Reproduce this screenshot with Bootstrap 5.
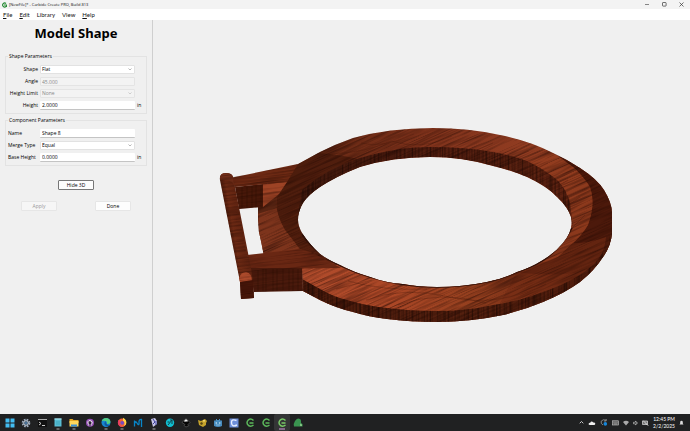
<!DOCTYPE html>
<html lang="en">
<head>
<meta charset="utf-8">
<meta name="viewport" content="width=device-width, initial-scale=1">
<title>[NewFile]* - Carbide Create PRO, Build 813</title>
<link href="https://cdn.jsdelivr.net/npm/bootstrap@5.3.0/dist/css/bootstrap.min.css" rel="stylesheet">
<style>
body{font-family:"Open Sans","Noto Sans",sans-serif;font-size:5px;line-height:7px;color:#111;background:#f0f0f0}
svg{display:block}
button{font:inherit;color:inherit;background:none;border:0;padding:0}
.titlebar{background:#f3f3f3;height:9px;padding-left:2px;gap:2px}
.titlebar .caption{color:#111;font-size:4px}
.winbtn{width:17px;height:9px;display:grid;place-items:center}
.menubar{background:#fff;height:11px;padding-left:3px;gap:7px;font-family:Lato,sans-serif;font-size:6px}
.menubar a{color:#111;text-decoration:none}
.menubar u{text-underline-offset:1px}
.side{width:153px;border-right:1px solid #cfcfcf;padding:0 5px}
.side form{color:#000}
.side h1{font-family:"Noto Sans","Open Sans",sans-serif;font-size:13px;line-height:18px;font-weight:700;margin:4px 0 11px;text-align:center;color:#000}
fieldset.group{border:1px solid #e3e3e3;padding:5px 2px 0;margin:0 0 3px}
fieldset.group legend{float:none;width:auto;font-size:5px;line-height:7px;margin:0;padding:0 1px}
.prop{display:grid;grid-template-columns:30px 1fr 7px;column-gap:2px;align-items:center;height:9px;margin-bottom:3px}
.prop input,.prop select{height:9px;width:100%;font:inherit;line-height:7px;border:0;border-bottom:1px solid #c4c4c4;background:#fff;color:#000;padding:0 2px;border-radius:1px;appearance:none}
.prop select{border:1px solid #e2e2e2;padding:0 1px}
.prop :disabled{background:#f3f3f3;color:#888;border:1px solid #e4e4e4;padding:0 1px;opacity:1}
.pick{display:grid;align-items:center}
.pick>*{grid-area:1/1}
.pick svg{justify-self:end;margin-right:3px;pointer-events:none}
.actions{padding-top:11px}
.push{width:36px;height:10px;background:#fdfdfd;border:1px solid #e6e6e6;border-radius:1px;line-height:8px}
.push.focused{border-color:#777}
.push:disabled{color:#999;background:#f6f6f6}
.taskbar{background:#202122;height:17px;padding-left:2px;color:#fff}
.app{width:16px;height:17px;display:grid;place-items:center;align-content:center;border-radius:2px}
.app.active{background:#343536}
.tray{gap:4px;padding-right:6px}
.clock{text-align:right;font-family:Lato,sans-serif;font-size:5px;line-height:7px}
</style>
<script src="https://cdn.jsdelivr.net/npm/bootstrap@5.3.0/dist/js/bootstrap.bundle.min.js"></script>
</head>
<body class="d-flex flex-column vh-100 overflow-hidden">
<header>
  <div class="titlebar d-flex align-items-center">
    <svg width="5" height="6" viewBox="0 0 10 12"><path d="M8 3A4 4 0 1 0 8 9M4 6h5v4" fill="none" stroke="#278b35" stroke-width="2.3"/></svg>
    <span class="caption">[NewFile]* - Carbide Create PRO, Build 813</span>
    <div class="d-flex ms-auto">
      <button class="winbtn" aria-label="Minimize"><svg width="5" height="5"><path d="M0 2.5h4" stroke="#555" stroke-width=".7"/></svg></button>
      <button class="winbtn" aria-label="Maximize"><svg width="5" height="5"><rect x=".5" y=".5" width="3.6" height="3.6" rx=".6" fill="none" stroke="#333" stroke-width=".7"/></svg></button>
      <button class="winbtn" aria-label="Close"><svg width="5" height="5"><path d="M.5.5l4 4m0-4l-4 4" stroke="#333" stroke-width=".7"/></svg></button>
    </div>
  </div>
  <nav class="menubar d-flex align-items-center">
    <a href="#"><u>F</u>ile</a><a href="#"><u>E</u>dit</a><a href="#">Library</a><a href="#">View</a><a href="#"><u>H</u>elp</a>
  </nav>
</header>
<main class="d-flex flex-grow-1 overflow-hidden">
  <aside class="side flex-shrink-0">
    <h1>Model Shape</h1>
    <form>
      <fieldset class="group">
        <legend>Shape Parameters</legend>
        <div class="prop"><label class="text-end" for="shape">Shape</label><div class="pick"><select id="shape"><option>Flat</option></select><svg width="4" height="3"><path d="M.5.5L2 2 3.5.5" fill="none" stroke="#999" stroke-width=".7"/></svg></div></div>
        <div class="prop"><label class="text-end" for="angle">Angle</label><input id="angle" value="45.000" disabled></div>
        <div class="prop"><label class="text-end text-nowrap" for="limit">Height Limit</label><div class="pick"><select id="limit" disabled><option>None</option></select><svg width="4" height="3"><path d="M.5.5L2 2 3.5.5" fill="none" stroke="#bbb" stroke-width=".7"/></svg></div></div>
        <div class="prop"><label class="text-end" for="height">Height</label><input id="height" value="2.0000"><span>in</span></div>
      </fieldset>
      <fieldset class="group">
        <legend>Component Parameters</legend>
        <div class="prop"><label for="name">Name</label><input id="name" value="Shape 8"></div>
        <div class="prop"><label class="text-nowrap" for="merge">Merge Type</label><div class="pick"><select id="merge"><option>Equal</option></select><svg width="4" height="3"><path d="M.5.5L2 2 3.5.5" fill="none" stroke="#999" stroke-width=".7"/></svg></div></div>
        <div class="prop"><label class="text-nowrap" for="base">Base Height</label><input id="base" value="0.0000"><span>in</span></div>
      </fieldset>
      <div class="actions text-center"><button type="button" class="push focused">Hide 3D</button></div>
      <div class="actions d-flex justify-content-between px-3"><button type="button" class="push" disabled>Apply</button><button type="button" class="push">Done</button></div>
    </form>
  </aside>
  <section class="flex-grow-1 overflow-hidden">
    <svg width="100%" height="100%" viewBox="153 20 537 394" role="img" aria-label="3D preview">
      <defs>
        <filter id="grain" x="0" y="0" width="1" height="1" color-interpolation-filters="sRGB"><feTurbulence type="fractalNoise" baseFrequency=".02 .6" numOctaves="3" seed="8"/><feColorMatrix values="0 0 0 0 .12  0 0 0 0 .03  0 0 0 0 .01  2.4 0 0 0 -1"/></filter>
        <filter id="vgrain" x="0" y="0" width="1" height="1" color-interpolation-filters="sRGB"><feTurbulence type="fractalNoise" baseFrequency=".5 .006" numOctaves="3" seed="5"/><feColorMatrix values="0 0 0 0 .1  0 0 0 0 .03  0 0 0 0 .01  3 0 0 0 -1.25"/></filter>
        <linearGradient id="face" gradientUnits="userSpaceOnUse" x1="300" y1="120" x2="570" y2="310"><stop offset="0" stop-color="#5c2511"/><stop offset=".35" stop-color="#7f321b"/><stop offset=".6" stop-color="#913c21"/><stop offset="1" stop-color="#6e2912"/></linearGradient>
        <linearGradient id="lower" gradientUnits="userSpaceOnUse" x1="302" y1="0" x2="600" y2="0"><stop offset="0" stop-color="#b14c2c"/><stop offset=".3" stop-color="#ab4726"/><stop offset=".55" stop-color="#96401f"/><stop offset=".8" stop-color="#732c14"/><stop offset="1" stop-color="#55200f"/></linearGradient>
        <linearGradient id="wall" gradientUnits="userSpaceOnUse" x1="300" y1="0" x2="612" y2="0"><stop offset="0" stop-color="#4a1b0c"/><stop offset=".5" stop-color="#54200f"/><stop offset="1" stop-color="#4e1c0c"/></linearGradient>
        <linearGradient id="innerwall" gradientUnits="userSpaceOnUse" x1="300" y1="0" x2="572" y2="0"><stop offset="0" stop-color="#421a0e"/><stop offset=".5" stop-color="#521e10"/><stop offset="1" stop-color="#602412"/></linearGradient>
        <linearGradient id="bar" gradientUnits="userSpaceOnUse" x1="226" y1="235" x2="244" y2="232"><stop offset="0" stop-color="#391206"/><stop offset=".45" stop-color="#6d2a14"/><stop offset="1" stop-color="#602411"/></linearGradient>
        <clipPath id="ring"><path clip-rule="evenodd" d="M298 164L320 152Q336 144 353 138Q389 128 433 128Q469 128 500 135Q530 141 553 153Q568 160 580 168Q597 179 604 190Q612 203 612 213V233Q611 246 603 257Q595 270 580 282Q565 293 543 302Q524 310 503 315Q470 322 437 322Q410 322 387 319Q369 317 353 312Q336 308 320 300L303 291L302 268L264 256L261 241Q258 231 258 220V207L263 187Z M298 220Q298 211 303 203Q308 195 320 187Q337 176 360 167Q393 157 430 157Q463 157 493 166Q510 170 527 177Q548 187 557 197Q568 207 571 217Q574 230 563 243Q556 252 543 260Q530 268 517 272Q503 279 487 282Q463 287 437 287Q418 287 403 284Q386 283 370 277Q353 272 340 265Q328 260 320 254Q310 245 302 233Q298 226 298 220Z"/></clipPath>
        <clipPath id="outwall"><path id="outwallshape" d="M302 279L320 289Q334 297 347 300Q367 306 387 308Q410 311 437 311Q467 311 493 305Q520 301 540 293Q564 285 580 275Q596 265 603 252Q610 240 612 227L613 323H302Z"/></clipPath>
        <clipPath id="inwall"><path id="inwallshape" d="M302 190Q326 169 360 158Q380 152 400 149Q415 147 430 147Q465 147 493 152Q514 156 527 161Q544 169 557 180Q566 188 570 203L573 228Q569 207 557 197Q546 185 527 177Q510 170 493 166Q462 157 430 157Q393 157 360 167Q336 176 320 187Q308 195 303 203L298 217Z"/></clipPath>
        <clipPath id="fixture"><path d="M220 180Q219 173 226 173Q232 173 233 177L298 164L287 182L279 194L263 207L239 209L247 257L300 249L313 253L341 268H302L303 291L254 292V298L241 299L240 282Z"/></clipPath>
      </defs>
      <g clip-path="url(#ring)">
        <path fill="url(#face)" d="M250 120h370v210H250z"/>
        <path fill="url(#lower)" d="M300 266L340 265Q387 285 437 287Q475 286 517 272L558 257L600 255L580 282L437 322L302 300Z"/>
        <path fill="#3d1509" fill-opacity=".6" d="M298 164L278 193Q275 202 277 210Q279 220 285 230L300 249L342 267L320 254L299 222L304 201L320 187L345 174L370 162Q340 154 318 153Z"/>
        <path fill="#7d341c" d="M257 180L278 193Q275 202 277 210Q279 220 285 230L301 251L260 260Z"/>
        <path fill="#582412" d="M255 180L298 163L278 193Q276 200 277 208L257 214Z"/>
        <path fill="#4c190b" d="M545 146L573 167Q584 177 590 187Q596 203 588 225Q582 235 573 243L558 257Q535 266 520 273Q560 276 580 272L615 250V150Z"/>
        <path fill="#98401f" fill-opacity=".6" d="M553 153L573 167Q584 177 590 187Q596 203 588 225Q582 235 573 243L558 257Q550 262 543 262L572 225L570 200L557 180L530 162Z"/>
        <path fill="#732b14" d="M517 272L558 257L573 243Q590 243 606 237Q605 252 596 262Q575 282 540 293L500 303Z" opacity=".6"/>
        <use href="#inwallshape" fill="url(#innerwall)"/>
        <use href="#outwallshape" fill="url(#wall)"/>
        <g transform="rotate(-24 430 225)"><rect x="215" y="60" width="430" height="330" filter="url(#grain)" opacity=".55"/></g>
        <g clip-path="url(#inwall)"><rect x="290" y="130" width="290" height="110" filter="url(#vgrain)" opacity=".6"/></g>
        <g clip-path="url(#outwall)"><rect x="300" y="220" width="315" height="105" filter="url(#vgrain)" opacity=".6"/></g>
        <g fill="none" stroke="#42160b" stroke-opacity=".5" stroke-width=".6"><path d="M329 154Q365 153 391 141Q423 151 452 136M361 143Q382 149 414 134M348 281Q383 291 427 289M366 300Q404 286 450 297T546 284M398 305Q440 290 486 303M336 289L372 280M493 143L477 150M529 151L500 162M548 163L522 176M568 180L548 192M580 197L560 211M585 215L563 237"/></g>
        <path d="M302 234Q320 262 370 277Q402 287 437 287Q488 286 517 272Q555 261 572 228" stroke="#2d1009" stroke-width="1.6" fill="none"/>
      </g>
      <path fill="#9d4325" d="M263 184L287 182L279 194L263 207Z"/>
      <path fill="#471809" d="M235 187L263 184V207L239 209Z"/>
      <path fill="#6c2913" d="M230 178L298 164L287 182L235 187Z"/>
      <path fill="#692713" d="M242 256L247 255L300 249L313 253L341 268L249 269Z"/>
      <path fill="#4a1a0c" d="M249 268H302L303 291L254 292Z"/>
      <path fill="url(#bar)" d="M220 180Q219 173 226 173Q232 173 233 177L235 187L251 268L253 282L254 298L241 299L240 282Z"/>
      <path fill="#75301a" d="M220 180Q219 173 226 173Q232 173 233 177L234 184Q229 179 220 180Z"/>
      <path fill="#ab4a2b" d="M239 278Q241 272 246 272Q252 273 252 281L240 282Z"/>
      <path fill="#461609" d="M240 282L253 280L254 298L241 299Z"/>
      <g clip-path="url(#fixture)"><g transform="rotate(-7 270 230)"><rect x="205" y="150" width="145" height="160" filter="url(#grain)" opacity=".45"/></g></g>
      <g stroke="#240b04" stroke-opacity=".5" stroke-width=".7"><path d="M242 187v21M247 187v21M252 186v22M256 185v22M261 185v22M258 270v21M263 269v22M266 269v22M273 269v22M277 269v22M283 269v21M289 269v22M293 269v22M298 269v22"/></g>
    </svg>
  </section>
</main>
<footer class="taskbar d-flex align-items-center flex-shrink-0">
  <button class="app" aria-label="Start"><svg width="12" height="14" viewBox="0 0 12 14"><path fill="#43bdf1" d="M1.5 2.5h4v4h-4zM6.500 2.5h4v4h-4zM1.5 7.5h4v4h-4zM6.500 7.5h4v4h-4z"/></svg></button>
  <button class="app" aria-label="Settings"><svg width="12" height="14" viewBox="0 0 12 14"><circle cx="6" cy="7" r="3.4" fill="none" stroke="#9ba9bb" stroke-width="1.8" stroke-dasharray="1.7 1"/><circle cx="6" cy="7" r="2.3" fill="#33475e" stroke="#c5d1dd"/><circle cx="6" cy="7" r=".8" fill="#65a8e0"/></svg></button>
  <button class="app" aria-label="Terminal"><svg width="12" height="14" viewBox="0 0 12 14"><path fill="#111" d="M2 4h9v7H2z"/><path fill="#aaa" d="M2 3h9v1H2z"/><path d="M3 6l2 1.5L3 9m3 .5h3" fill="none" stroke="#ddd" stroke-width=".9"/></svg></button>
  <button class="app" aria-label="Notepad"><svg width="12" height="14" viewBox="0 0 12 14"><path fill="#58bdd4" d="M2.5 2.5h7v8h-7z"/><path fill="#b8e9ef" d="M2.5 2.5h7v1h-7z"/><path d="M4 6h4M4 8h4" stroke="#278da7" stroke-width=".5"/><path d="M4.5 13h3" stroke="#aaa"/></svg></button>
  <button class="app" aria-label="File Explorer"><svg width="12" height="14" viewBox="0 0 12 14"><path fill="#e6a822" d="M1.5 3h3l1 1h5v3h-9z"/><path fill="#ffd65c" d="M1.5 5h9v5.5h-9z"/><path fill="#3b91d6" d="M3 8.5h6v2H3z"/><path d="M4.5 13h3" stroke="#aaa"/></svg></button>
  <button class="app" aria-label="GitHub Desktop"><svg width="12" height="14" viewBox="0 0 12 14"><circle cx="6" cy="6.7" r="4" fill="#9650b6"/><path d="M4.8 9.5V8.4Q3.6 7.4 4 5.7q.8-1.3 2-1t2 1q.4 1.7-.8 2.7v1.1" fill="#2d1d37" stroke="#fff"/></svg></button>
  <button class="app" aria-label="Edge"><svg width="12" height="14" viewBox="0 0 12 14"><circle cx="6" cy="6.5" r="4.5" fill="#1685d1"/><path fill="#54cc82" d="M1.7 5Q3 2 6 2q4 0 4.5 4-.5 2.5-3.5 2 .8-4-5.3-3z"/><path fill="#12569b" d="M5.5 5Q3 8 6 10q2 1 3.7-1Q6 9.5 5.5 5z"/><path d="M4.5 13h3" stroke="#aaa"/></svg></button>
  <button class="app" aria-label="Firefox"><svg width="12" height="14" viewBox="0 0 12 14"><circle cx="6" cy="6.7" r="4.2" fill="#f06235"/><path fill="#ffd446" d="M7 1.8Q11.5 4 10 8.5L8 10Q9.5 6 7 5z"/><path fill="#e9366e" d="M2 4v3q1 4 4.5 4Q3 9 3.5 5z"/><circle cx="6.2" cy="6.8" r="1.9" fill="#784bc2"/><path d="M4.5 13h3" stroke="#aaa"/></svg></button>
  <button class="app" aria-label="Machine control"><svg width="12" height="14" viewBox="0 0 12 14"><path d="M2.500 10.5V4.5M3 7Q3.500 4.500 5 7 7.500 11 7 5.500 7.500 3 9.500 3.500V11" fill="none" stroke="#0786c9" stroke-width="1.3"/></svg></button>
  <button class="app" aria-label="Git client"><svg width="12" height="14" viewBox="0 0 12 14"><path fill="#c7c5e5" d="M3 3l4-1 2 3v3l-4 3-1-4z"/><path d="M5 3l2 3-2 2M8 5v4" stroke="#3b3e9d" fill="none"/><path d="M4.5 13h3" stroke="#aaa"/></svg></button>
  <button class="app" aria-label="Affinity"><svg width="12" height="14" viewBox="0 0 12 14"><circle cx="6" cy="6.7" r="4.2" fill="#10bed0"/><path d="M4 9l4-5M6 4h2v4M3.5 6h2" fill="none" stroke="#12424a"/></svg></button>
  <button class="app" aria-label="Vector editor"><svg width="12" height="14" viewBox="0 0 12 14"><path fill="#050505" stroke="#777" stroke-width=".5" d="M6 2.5l4 4-2 2 1 1-3 1.5-2-1.5 1-1-3-2z"/><path fill="#eee" d="M6 3l2 2-1 .7-1-.5-1 .7-1-.9z"/></svg></button>
  <button class="app" aria-label="Modeler"><svg width="12" height="14" viewBox="0 0 12 14"><path fill="#c5a32c" d="M2 4l3 1 4-2 2 2-1 2v2l-3 2-4-2z"/><path fill="#594713" d="M5 6l2 1-1 2-2-1z"/><circle cx="8" cy="4.8" r="1" fill="#f5dc72"/></svg></button>
  <button class="app" aria-label="Game editor"><svg width="12" height="14" viewBox="0 0 12 14"><path fill="#478cbf" d="M2 5l1-1 1 .7V3h1v1h2V3h1v1.7L9 4l1 1v5q-4 2-8 0z"/><circle cx="4.3" cy="7" r=".8" fill="#cde8f8"/><circle cx="7.7" cy="7" r=".8" fill="#cde8f8"/><path d="M4 9h4" stroke="#cde8f8" stroke-width=".5"/></svg></button>
  <button class="app" aria-label="CAD"><svg width="12" height="14" viewBox="0 0 12 14"><path fill="#6d8ed9" d="M1.5 2.5h9v9h-9z"/><path d="M8.5 4.5Q3 2.5 3.5 7T9 9" fill="none" stroke="#e6edff" stroke-width="1.4"/></svg></button>
  <button class="app" aria-label="Carbide Motion"><svg width="12" height="14" viewBox="0 0 12 14"><path d="M9.5 4.5Q7 2 4.5 3.8 1.5 7 4.5 9.5 7 11 9.5 9M9.5 7H5.5" fill="none" stroke="#5cb85b" stroke-width="1.5"/></svg></button>
  <button class="app" aria-label="Carbide Create"><svg width="12" height="14" viewBox="0 0 12 14"><path d="M9.5 4.5Q7 2 4.5 3.8 1.5 7 4.5 9.5 7 11 9.5 9M9.5 7H5.5" fill="none" stroke="#5cb85b" stroke-width="1.5"/></svg></button>
  <button class="app active" aria-label="Carbide Create PRO"><svg width="12" height="14" viewBox="0 0 12 14"><path d="M9.5 4.5Q7 2 4.5 3.8 1.5 7 4.5 9.5 7 11 9.5 9M9.5 7H5.5" fill="none" stroke="#78ca67" stroke-width="1.5"/><path d="M3 13h6" stroke="#d59add"/></svg></button>
  <button class="app" aria-label="Dinosaur"><svg width="12" height="14" viewBox="0 0 12 14"><path fill="#3a9450" d="M6 2.5Q9 2.5 9 5v2l1.5 1v2.5H2Q1 8 3 5 4 3 6 2.5z"/><path fill="#85c384" d="M8 7.5l2 1v1.5H8z"/></svg></button>
  <div class="tray d-flex align-items-center ms-auto">
    <svg width="5" height="5"><path d="M.7 3.3l1.8-1.8 1.8 1.8" stroke="#eee" stroke-width=".8" fill="none"/></svg>
    <svg width="8" height="6"><path fill="#eee" d="M1.7 5Q0 4.7.8 3.2q.7-.6 1.4-.4Q3.5.4 5.3 2.5q2-.2 2 1.3Q7.2 5 6 5z"/></svg>
    <svg width="8" height="7"><path d="M6 1.2Q3-.2 1.2 2.2.5 4.8 3 6M6.2 0v2H4" fill="none" stroke="#aaa" stroke-width=".7"/><circle cx="5.3" cy="4.9" r="1.8" fill="#1686d9"/></svg>
    <svg width="7" height="6"><rect x=".5" y=".8" width="6" height="4.2" fill="#555" stroke="#ccc" stroke-width=".6"/><path d="M1.5 2h4M1.5 3h4M2 4h3" stroke="#ddd" stroke-width=".5" stroke-dasharray=".7 .4"/></svg>
    <div class="d-flex gap-1"><svg width="6" height="6"><path fill="#aaa" d="M0 2Q3-.5 6 2L3 5.5z"/></svg>
    <svg width="5" height="6"><path d="M.5 2.3h1L3 1v4L1.5 3.8h-1zM4 2v2" fill="none" stroke="#ddd" stroke-width=".6"/></svg>
    <svg width="7" height="6"><path d="M.5 1h5v3.5h-5zM3 2.5l3 3M1 .5l5 5" fill="#777" stroke="#ddd" stroke-width=".7"/></svg></div>
    <div class="clock">12:45 PM<br>2/2/2025</div>
    <svg width="5" height="6"><path d="M.5 4.5h4l-.7-1V2Q3.7.7 2.5.7T1.200 2v1.5z" fill="#ddd"/></svg>
  </div>
</footer>
</body>
</html>
